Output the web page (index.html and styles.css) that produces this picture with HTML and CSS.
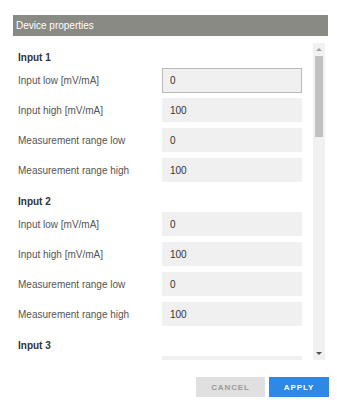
FILE: index.html
```html
<!DOCTYPE html>
<html lang="en">
<head>
  <meta charset="UTF-8" />
  <meta name="viewport" content="width=device-width, initial-scale=1.0" />
  <title>Device properties</title>
  <link rel="stylesheet" href="styles.css">
</head>
<body>
  <div class="dialog">
    <div class="dialog-title">Device properties</div>

    <div class="dialog-body">
      <div class="props">
        <div class="group">
          <div class="group-title">Input 1</div>
          <div class="prop"><label>Input low [mV/mA]</label><input class="field focused" value="0"></div>
          <div class="prop"><label>Input high [mV/mA]</label><input class="field" value="100"></div>
          <div class="prop"><label>Measurement range low</label><input class="field" value="0"></div>
          <div class="prop"><label>Measurement range high</label><input class="field" value="100"></div>
        </div>
        <div class="group">
          <div class="group-title">Input 2</div>
          <div class="prop"><label>Input low [mV/mA]</label><input class="field" value="0"></div>
          <div class="prop"><label>Input high [mV/mA]</label><input class="field" value="100"></div>
          <div class="prop"><label>Measurement range low</label><input class="field" value="0"></div>
          <div class="prop"><label>Measurement range high</label><input class="field" value="100"></div>
        </div>
        <div class="group">
          <div class="group-title">Input 3</div>
          <div class="prop"><label></label><input class="field" value=""></div>
        </div>
      </div>

      <div class="scrollbar">
        <div class="scroll-btn"><span class="arrow-up"></span></div>
        <div class="scroll-track"><div class="scroll-thumb"></div></div>
        <div class="scroll-btn"><span class="arrow-down"></span></div>
      </div>
    </div>

    <div class="dialog-actions">
      <button class="btn btn-cancel">CANCEL</button>
      <button class="btn btn-apply">APPLY</button>
    </div>
  </div>
</body>
</html>
```

FILE: styles.css
```css
body {
  margin: 0;
  background: #fff;
  font-family: 'Liberation Sans', Arial, sans-serif;
  font-size: 10px;
}
.dialog {
  width: 315px;
  padding: 15px 0 0 13px;
}
.dialog-title {
  height: 21px;
  line-height: 21px;
  padding-left: 3px;
  background: #8a8a85;
  color: #fff;
  font-size: 10px;
}
.dialog-body {
  display: flex;
  height: 317px;
  margin-top: 7px;
}
.props {
  width: 295px;
  padding: 7px 0 0 5px;
  overflow: hidden;
}
.group + .group { margin-top: 9px; }
.group-title {
  height: 15px;
  line-height: 15px;
  font-weight: bold;
  color: #333;
}
.prop {
  display: flex;
  align-items: center;
  height: 30px;
}
.prop label {
  width: 144px;
  color: #555;
}
.field {
  box-sizing: border-box;
  width: 140px;
  height: 24px;
  margin: 0;
  padding: 0 7px;
  border: 1px solid transparent;
  background: #f0f0f0;
  font-family: inherit;
  font-size: 10px;
  color: #333;
  outline: none;
}
.field.focused {
  height: 25px;
  border-color: #b8b8b8;
}
.scrollbar {
  width: 12px;
  display: flex;
  flex-direction: column;
  background: #f1f1f1;
}
.scroll-btn {
  height: 13px;
  display: flex;
  align-items: center;
  justify-content: center;
}
.arrow-up {
  border-left: 3px solid transparent;
  border-right: 3px solid transparent;
  border-bottom: 3px solid #a3a3a3;
}
.arrow-down {
  border-left: 3px solid transparent;
  border-right: 3px solid transparent;
  border-top: 3px solid #505050;
}
.scroll-track {
  flex: 1;
  padding: 0 2px;
}
.scroll-thumb {
  height: 81px;
  background: #c1c1c1;
}
.dialog-actions {
  display: flex;
  justify-content: flex-end;
  gap: 4px;
  margin-top: 17px;
  width: 316px;
}
.btn {
  height: 20px;
  border: none;
  padding: 0;
  font-family: 'Liberation Sans', Arial, sans-serif;
  font-size: 8px;
  font-weight: bold;
  letter-spacing: 0.9px;
  cursor: pointer;
}
.btn-cancel {
  width: 69px;
  background: #e0e0e0;
  color: #9a9a9a;
}
.btn-apply {
  width: 60px;
  background: #2d89e5;
  color: #fff;
}
```
